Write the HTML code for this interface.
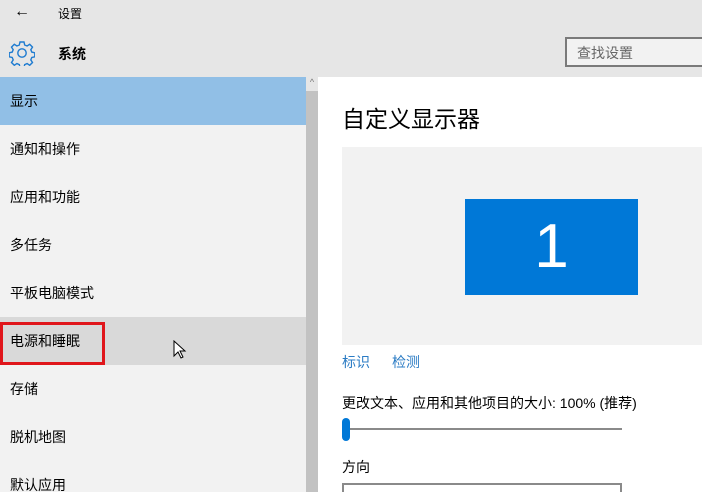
<!DOCTYPE html>
<html><head><meta charset="utf-8"><style>
*{margin:0;padding:0;box-sizing:border-box}
html{width:702px;height:492px;overflow:hidden}
body{width:702px;height:492px;overflow:hidden;background:#fff;font-family:"Liberation Sans","Noto Sans CJK SC",sans-serif;position:relative;color:#000}
.a{position:absolute}
.hdr{left:0;top:0;width:702px;height:77px;background:#e6e6e6}
.side{left:0;top:77px;width:306px;height:415px;background:#f2f2f2}
.item{position:absolute;left:0;width:306px;height:48px;font-size:14px;line-height:48px;padding-left:10px}
.sb{left:306px;top:77px;width:12px;height:415px;background:#c2c2c2}
</style></head><body>
<div class="a hdr"></div>
<div class="a" style="left:14px;top:3px;font-size:16px">&#8592;</div>
<div class="a" style="left:58px;top:5px;font-size:12px">设置</div>
<svg class="a" style="left:9px;top:40px" width="26" height="26" viewBox="0 0 26 26"><path d="M11 2h4l.7 3 2.4 1 2.6-1.7 2.8 2.8-1.7 2.6 1 2.4 3 .7v4l-3 .7-1 2.4 1.7 2.6-2.8 2.8-2.6-1.7-2.4 1-.7 3h-4l-.7-3-2.4-1-2.6 1.7-2.8-2.8 1.7-2.6-1-2.4-3-.7v-4l3-.7 1-2.4-1.7-2.6 2.8-2.8 2.6 1.7 2.4-1z" fill="none" stroke="#1e7bd0" stroke-width="1.4"/><circle cx="13" cy="13" r="4.2" fill="none" stroke="#1e7bd0" stroke-width="1.4"/></svg>
<div class="a" style="left:58px;top:44px;font-size:14px;font-weight:bold">系统</div>
<div class="a" style="left:565px;top:37px;width:140px;height:30px;border:2px solid #7a7a7a;background:#f2f2f2;font-size:14px;color:#666;padding:4px 0 0 10px">查找设置</div>
<div class="a side">
<div class="item" style="top:0;background:#91bfe6">显示</div>
<div class="item" style="top:48px">通知和操作</div>
<div class="item" style="top:96px">应用和功能</div>
<div class="item" style="top:144px">多任务</div>
<div class="item" style="top:192px">平板电脑模式</div>
<div class="item" style="top:240px;background:#d9d9d9">电源和睡眠</div>
<div class="item" style="top:288px">存储</div>
<div class="item" style="top:336px">脱机地图</div>
<div class="item" style="top:384px">默认应用</div>
</div>
<div class="a" style="left:0;top:322px;width:105px;height:43px;border:3px solid #e0161b"></div>
<svg class="a" style="left:173px;top:340px" width="14" height="20" viewBox="0 0 14 20"><path d="M1 1v15l4-4 3 6 2-1-3-6h5z" fill="#fff" stroke="#000" stroke-width="1"/></svg>
<div class="a sb"><div style="height:14px;background:#e6e6e6;font-size:9px;text-align:center;color:#777">^</div></div>
<div class="a" style="left:342px;top:100px;font-size:23px">自定义显示器</div>
<div class="a" style="left:342px;top:147px;width:360px;height:198px;background:#f2f2f2"></div>
<div class="a" style="left:465px;top:199px;width:173px;height:96px;background:#0078d7;color:#fff;font-size:62px;font-weight:300;text-align:center;line-height:96px">1</div>
<div class="a" style="left:342px;top:352px;font-size:14px;color:#2a7bc4">标识</div>
<div class="a" style="left:392px;top:352px;font-size:14px;color:#2a7bc4">检测</div>
<div class="a" style="left:342px;top:393px;font-size:14px">更改文本、应用和其他项目的大小: 100% (推荐)</div>
<div class="a" style="left:348px;top:428px;width:274px;height:2px;background:#8a8a8a"></div>
<div class="a" style="left:342px;top:418px;width:8px;height:23px;background:#0078d7;border-radius:4px"></div>
<div class="a" style="left:342px;top:457px;font-size:14px">方向</div>
<div class="a" style="left:342px;top:483px;width:280px;height:9px;border:2px solid #8a8a8a;border-bottom:none"></div>
</body></html>
